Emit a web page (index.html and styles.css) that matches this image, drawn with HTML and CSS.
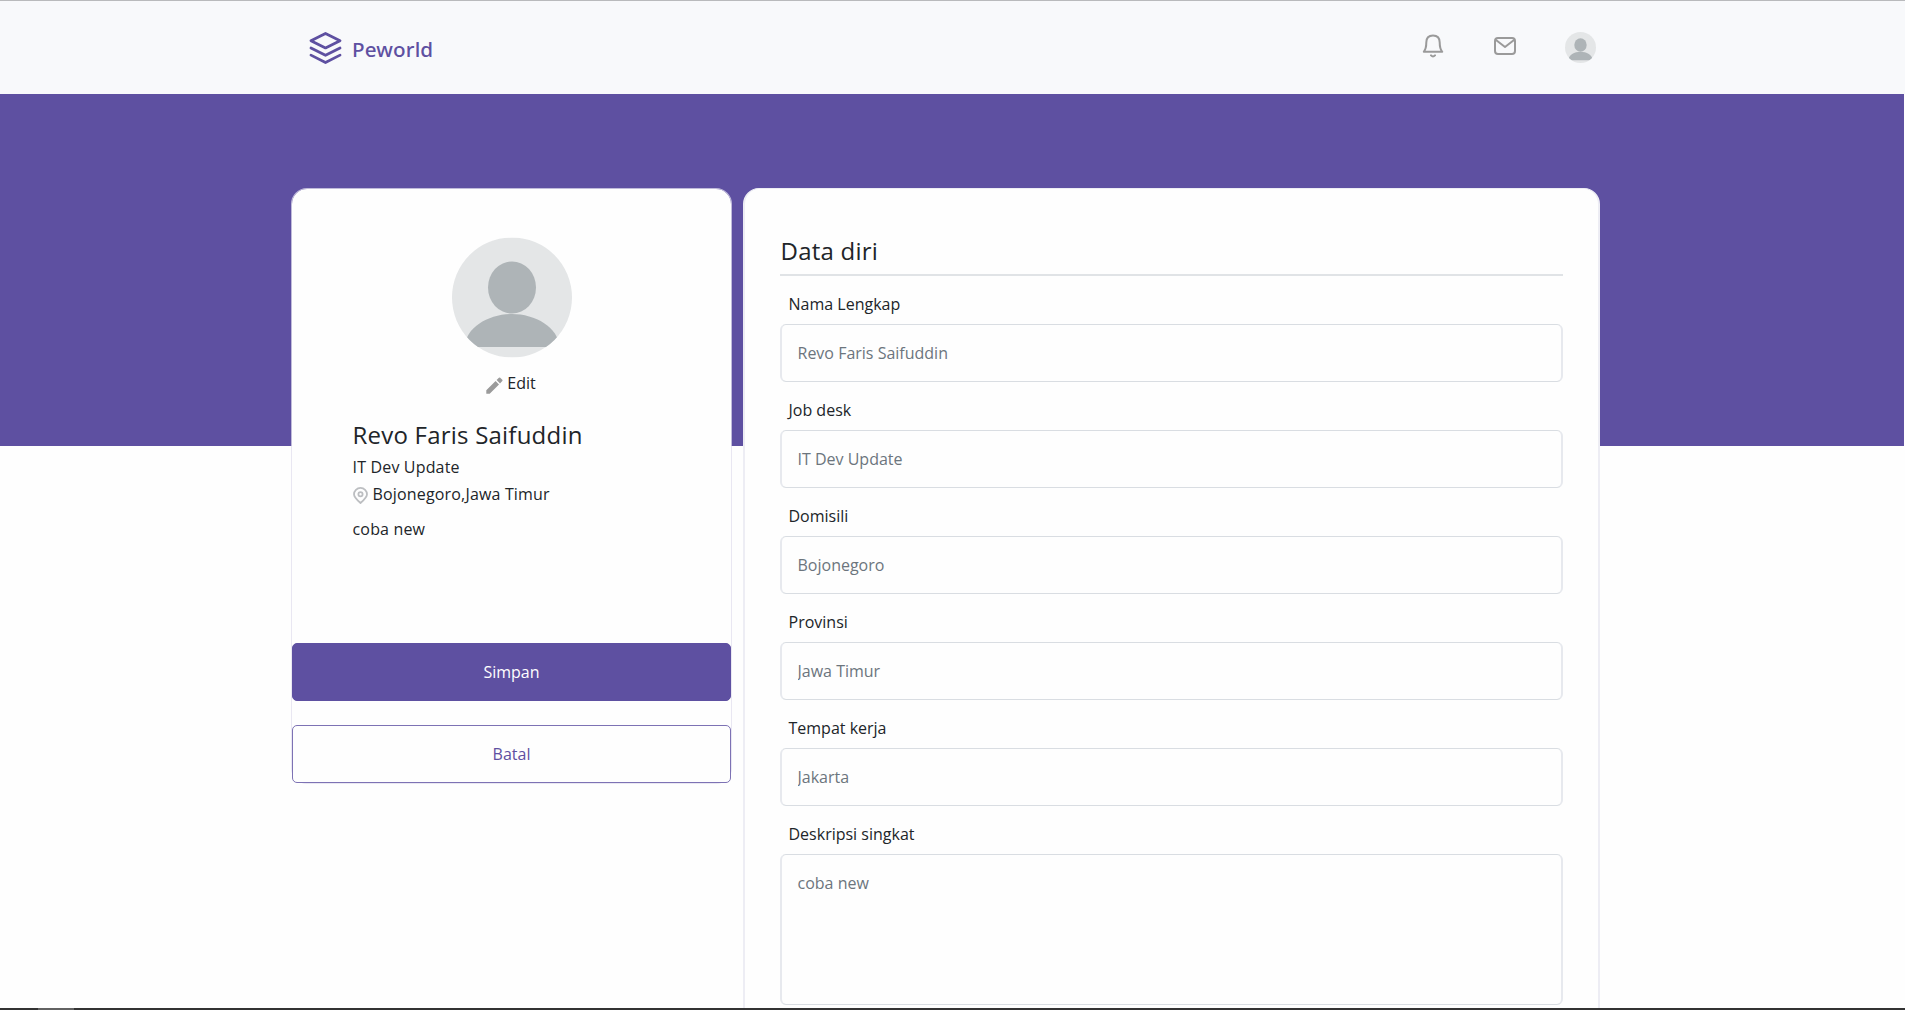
FILE: index.html
```html
<!DOCTYPE html>
<html lang="id">
<head>
<meta charset="utf-8">
<title>Peworld</title>
<link rel="stylesheet" href="styles.css">
</head>
<body>
<svg width="0" height="0" class="defs" aria-hidden="true">
  <symbol id="avatar" viewBox="0 0 120 120">
    <clipPath id="disc"><circle cx="60" cy="60" r="60"/></clipPath>
    <g clip-path="url(#disc)">
      <rect width="120" height="120" fill="#e4e6e7"/>
      <ellipse cx="60" cy="50" rx="24" ry="26" fill="#aeb4b7"/>
      <path d="M13 109.5 C13 90 37 76.5 60 76.5 S107 90 107 109.5Z" fill="#aeb4b7"/>
    </g>
  </symbol>
</svg>
<header class="navbar">
  <a class="brand">
    <svg class="brand-icon" viewBox="0 0 34 34" fill="none" stroke="#5e50a1" stroke-width="2.8" stroke-linejoin="round" stroke-linecap="round"><path d="M17 2 L32 9.5 L17 17 L2 9.5Z M2 17 L17 24.5 L32 17 M2 24.3 L17 32 L32 24.3"/></svg>
    <span>Peworld</span>
  </a>
  <nav class="actions">
    <svg class="bell" viewBox="0 0 22 24" fill="none" stroke="#9a9a9a" stroke-width="2" stroke-linejoin="round" stroke-linecap="round"><path d="M1.8 17.8 C4 15 4.3 13 4.3 8.5 C4.3 3.8 7 1.5 11 1.5 S17.7 3.8 17.7 8.5 C17.7 13 18 15 20.2 17.8Z M9 21.4 Q11 23.4 13 21.4"/></svg>
    <svg class="mail" viewBox="0 0 22 18" fill="none" stroke="#9a9a9a" stroke-width="2" stroke-linejoin="round" stroke-linecap="round"><rect x="1" y="1" width="20" height="16" rx="3"/><path d="M2 3 L11 10 L20 3"/></svg>
    <svg class="nav-avatar"><use href="#avatar"/></svg>
  </nav>
</header>
<main class="page">
  <div class="columns">
    <aside class="profile">
      <svg class="avatar"><use href="#avatar"/></svg>
      <div class="edit">
        <svg class="pencil" viewBox="0 0 17 17" fill="#9b9b9b"><path d="M0.3 13.3 V16.7 H3.7 L13 7.4 L9.6 4Z M10.6 3 L14 6.4 L16.3 4.1 Q16.9 3.4 16.3 2.8 L14.2 0.7 Q13.5 0.1 12.9 0.7Z"/></svg>
        <span>Edit</span>
      </div>
      <div class="bio">
        <h1>Revo Faris Saifuddin</h1>
        <p class="job">IT Dev Update</p>
        <p class="place"><svg class="pin" viewBox="0 0 15 17" fill="none" stroke="#bcbec1" stroke-width="1.8"><path d="M7.5 16 C4 13 1 10.5 1 7.3 A6.5 6.4 0 0 1 14 7.3 C14 10.5 11 13 7.5 16Z"/><circle cx="7.5" cy="7.3" r="2.1"/></svg>Bojonegoro,Jawa Timur</p>
        <p class="about">coba new</p>
      </div>
      <button class="btn save">Simpan</button>
      <button class="btn cancel">Batal</button>
    </aside>
    <form class="details">
      <h2>Data diri</h2>
      <hr>
      <label>Nama Lengkap</label><input placeholder="Revo Faris Saifuddin">
      <label>Job desk</label><input placeholder="IT Dev Update">
      <label>Domisili</label><input placeholder="Bojonegoro">
      <label>Provinsi</label><input placeholder="Jawa Timur">
      <label>Tempat kerja</label><input placeholder="Jakarta">
      <label>Deskripsi singkat</label><textarea placeholder="coba new"></textarea>
    </form>
  </div>
</main>
<div class="taskbar"><i></i></div>
</body>
</html>
```
FILE: styles.css
```css
* { box-sizing: border-box; }
body {
  margin: 0;
  height: 1010px;
  overflow: hidden;
  display: flex;
  flex-direction: column;
  background: #fefefe;
  color: #212529;
  font: 16px/24px "Open Sans", "Noto Sans", sans-serif;
}
.defs { position: absolute; }
svg { display: block; flex: none; }
h1, h2, p { margin: 0; font-weight: 400; }

.navbar {
  flex: none;
  height: 94px;
  padding: 0 309px 0 309px;
  display: flex;
  justify-content: space-between;
  background: #f8f9fb;
  border-top: 1px solid #b9babc;
}
.brand {
  display: flex;
  gap: 10px;
  padding-top: 30px;
  color: #5e50a1;
  font: 500 20.6px/36px "Noto Sans", "Open Sans", sans-serif;
  letter-spacing: .15px;
}
.brand-icon { width: 33px; height: 34px; }
.actions { display: flex; align-items: flex-start; }
.bell { width: 22px; height: 24px; margin: 33px 50px 0 0; }
.mail { width: 22px; height: 18px; margin: 36px 49px 0 0; }
.nav-avatar { width: 31px; height: 31px; margin-top: 31px; }

.page {
  flex: 1;
  min-height: 0;
  overflow: hidden;
  margin-right: 1px;
  padding: 94px 304px 0 291px;
  background: linear-gradient(#5e50a1 352px, #fefefe 352px);
}
.columns { display: flex; align-items: flex-start; gap: 11px; }
.profile, .details {
  background: #fefefe;
  border: 1px solid #ededf4;
  border-radius: 16px;
}
.profile {
  width: 441px;
  height: 596px;
  display: flex;
  flex-direction: column;
  padding-top: 48px;
  background-clip: padding-box;
  border-color: rgba(225, 223, 238, .75);
}
.avatar { width: 120px; height: 121px; align-self: center; }
.edit { display: flex; justify-content: center; gap: 4px; margin: 13px 1px 0 0; }
.pencil { width: 17px; height: 17px; margin-top: 6px; }
.bio { height: 248px; padding: 25px 60.5px 0; letter-spacing: .17px; }
.bio h1, .details h2 { font-size: 24px; line-height: 29px; letter-spacing: .22px; }
.details h2 { padding-left: .5px; }
.job { margin-top: 6px; }
.place { display: flex; gap: 5px; margin-top: 3px; }
.pin { width: 15px; height: 17px; margin-top: 5px; }
.about { margin-top: 11px; }
.btn {
  flex: none;
  height: 58px;
  border: 1px solid #5e50a1;
  border-radius: 5px;
  font: inherit;
  padding: 0;
}
.save { background: #5e50a1; color: #fefefe; }
.cancel { margin-top: 24px; background: #fefefe; border-color: #7d72b4; color: #5e50a1; }

.details {
  width: 857px;
  height: 900px;
  border-width: 1px 2px;
  padding: 47px 35px 0;
}
hr { height: 2px; margin: 9px 0 16px; border: 0; background: #e0e3e6; }
label { display: block; margin-bottom: 8px; padding-left: 8.5px; }
input, textarea {
  display: block;
  width: 100%;
  height: 58px;
  margin: 0 0 16px;
  padding: 0 15.5px;
  border: solid;
  border-width: 1px 2px;
  border-color: #d9dde2 #e7e9ee;
  border-radius: 6px;
  background: #fefefe;
  font: inherit;
}
textarea { height: 151px; padding-top: 16px; resize: none; }
::placeholder { color: #6c757d; opacity: 1; }

.taskbar { flex: none; height: 2px; background: #333; padding-left: 38px; }
.taskbar i { display: block; width: 36px; height: 2px; background: #626262; }
```
